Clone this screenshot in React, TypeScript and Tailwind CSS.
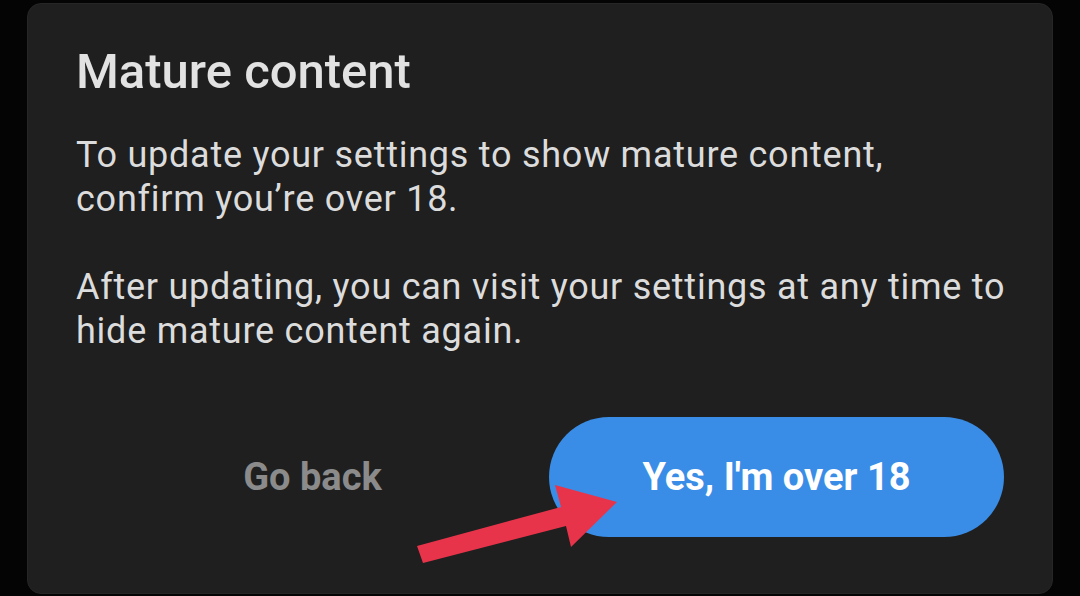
export default function App() {
  return (
    <div
      className="relative h-[596px] w-[1080px] overflow-hidden bg-[#040404] px-[27px] pt-[3px]"
      style={{ fontFamily: 'Roboto, "Noto Sans", sans-serif' }}
    >
      <div className="h-[591px] rounded-[14px] border border-[#262626] bg-[#1f1f1f] px-[48px] pt-[40px]">
        <h1 className="text-[49px] font-medium leading-[56px] text-[#e2e2e2]">Mature content</h1>
        <p className="mt-[33px] whitespace-nowrap text-[36px] leading-[44px] tracking-[0.75px] text-[#dcdcdc]">
          To update your settings to show mature content,
          <br />
          confirm you’re over 18.
        </p>
        <p className="mt-[44px] whitespace-nowrap text-[36px] leading-[44px] tracking-[0.75px] text-[#dcdcdc]">
          After updating, you can visit your settings at any time to
          <br />
          hide mature content again.
        </p>
        <div className="mt-[64px] flex h-[120px] items-center">
          <button className="flex h-full flex-1 items-center justify-center text-[38px] font-bold text-[#8b8b8b]">
            Go back
          </button>
          <button className="flex h-full w-[455px] items-center justify-center rounded-full bg-[#3a8de6] text-[38px] font-bold text-white">
            Yes, I'm over 18
          </button>
        </div>
      </div>

      {/* red pointer arrow */}
      <svg
        className="pointer-events-none absolute left-0 top-0"
        width="1080"
        height="596"
        viewBox="0 0 1080 596"
      >
        <polygon
          points="417,546 561,507 555,485 617,502 571,547 566,526 423,563"
          fill="#e8344a"
        />
      </svg>
    </div>
  );
}
